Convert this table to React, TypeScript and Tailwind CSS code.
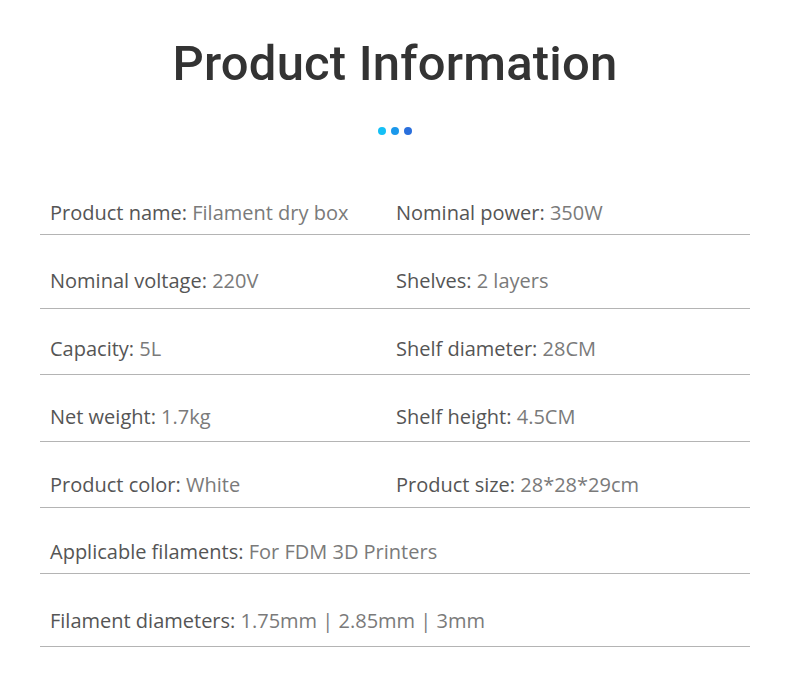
import React from 'react';

type Cell = { label: string; value: string };

const rows: { cells: Cell[]; h: string; pb: string }[] = [
    { cells: [{ label: 'Product name:', value: 'Filament dry box' }, { label: 'Nominal power:', value: '350W' }], h: 'h-[50px]', pb: 'pb-[8px]' },
    { cells: [{ label: 'Nominal voltage:', value: '220V' }, { label: 'Shelves:', value: '2 layers' }], h: 'h-[74px]', pb: 'pb-[14px]' },
    { cells: [{ label: 'Capacity:', value: '5L' }, { label: 'Shelf diameter:', value: '28CM' }], h: 'h-[66px]', pb: 'pb-[12px]' },
    { cells: [{ label: 'Net weight:', value: '1.7kg' }, { label: 'Shelf height:', value: '4.5CM' }], h: 'h-[67px]', pb: 'pb-[11px]' },
    { cells: [{ label: 'Product color:', value: 'White' }, { label: 'Product size:', value: '28*28*29cm' }], h: 'h-[66px]', pb: 'pb-[9px]' },
    { cells: [{ label: 'Applicable filaments:', value: 'For FDM 3D Printers' }], h: 'h-[66px]', pb: 'pb-[8px]' },
    { cells: [{ label: 'Filament diameters:', value: '1.75mm | 2.85mm | 3mm' }], h: 'h-[73px]', pb: 'pb-[12px]' },
];

const App = () => {
    return (
        <div className="w-[790px] h-[700px] bg-white overflow-hidden">
            <h1 className="pt-[34px] text-center font-['Roboto',sans-serif] font-medium text-[49px] leading-[60px] text-[#333333] tracking-[0.2px]">
                Product Information
            </h1>
            <div className="flex justify-center gap-[5px] mt-[33px]">
                <span className="w-[8px] h-[8px] rounded-full bg-[#14c0f6]" />
                <span className="w-[8px] h-[8px] rounded-full bg-[#1b98eb]" />
                <span className="w-[8px] h-[8px] rounded-full bg-[#2a6fdc]" />
            </div>
            <div className="mx-[40px] mt-[50px] font-['Open_Sans',sans-serif]">
                {rows.map((row, i) => (
                    <div key={i} className={`${row.h} ${row.pb} flex items-end border-b border-[#b4b4b4]`}>
                        {row.cells.map((c, j) => (
                            <p
                                key={j}
                                className={`${j === 0 ? 'w-[356px] pl-[10px]' : ''} whitespace-nowrap text-[20px] leading-[26px]`}
                            >
                                <span className="text-[#555555]">{c.label}</span>{' '}
                                <span className="text-[#7a7a7a]">{c.value}</span>
                            </p>
                        ))}
                    </div>
                ))}
            </div>
        </div>
    );
};

export default App;
